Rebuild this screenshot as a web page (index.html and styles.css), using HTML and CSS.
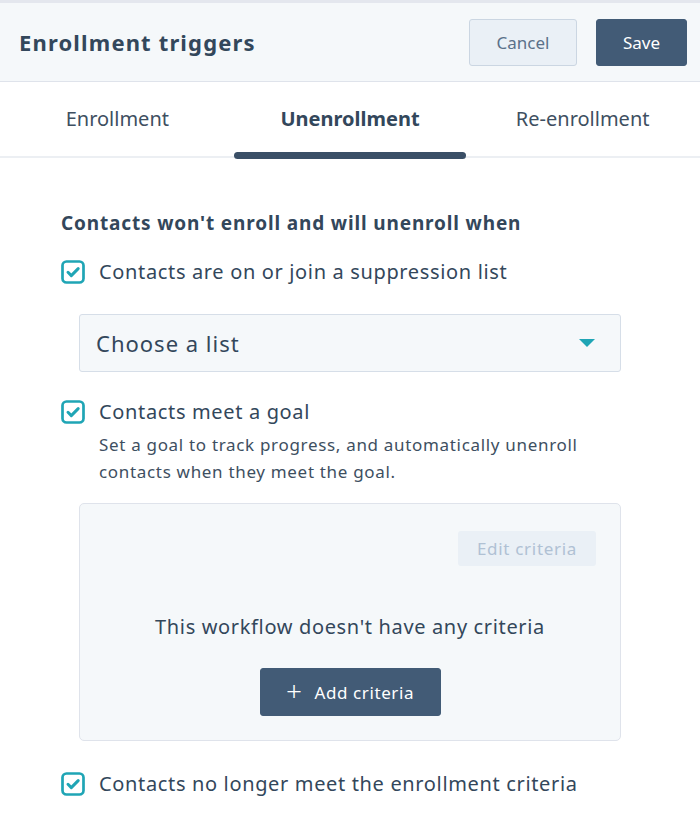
FILE: index.html
```html
<!DOCTYPE html>
<html lang="en">
<head>
  <meta charset="UTF-8" />
  <title>Enrollment triggers</title>
  <link rel="stylesheet" href="styles.css">
</head>
<body>
  <div class="panel">
    <header class="panel-header">
      <h1>Enrollment triggers</h1>
      <div class="header-actions">
        <button class="btn btn-secondary">Cancel</button>
        <button class="btn btn-primary">Save</button>
      </div>
    </header>

    <nav class="tabs">
      <div class="tab">Enrollment</div>
      <div class="tab active">Unenrollment</div>
      <div class="tab">Re-enrollment</div>
    </nav>

    <section class="content">
      <h2>Contacts won't enroll and will unenroll when</h2>

      <label class="check-row">
        <span class="checkbox">
          <svg viewBox="0 0 24 24" width="24" height="24"><rect x="1.5" y="1.5" width="21" height="21" rx="4" fill="none" stroke="#1fa5b5" stroke-width="2.7"/><path d="M7 12.3l3.3 3.3L17.2 8.6" fill="none" stroke="#1fa5b5" stroke-width="3" stroke-linecap="round" stroke-linejoin="round"/></svg>
        </span>
        <span>Contacts are on or join a suppression list</span>
      </label>

      <div class="select">
        <span>Choose a list</span>
        <span class="caret"></span>
      </div>

      <label class="check-row">
        <span class="checkbox">
          <svg viewBox="0 0 24 24" width="24" height="24"><rect x="1.5" y="1.5" width="21" height="21" rx="4" fill="none" stroke="#1fa5b5" stroke-width="2.7"/><path d="M7 12.3l3.3 3.3L17.2 8.6" fill="none" stroke="#1fa5b5" stroke-width="3" stroke-linecap="round" stroke-linejoin="round"/></svg>
        </span>
        <span>Contacts meet a goal</span>
      </label>
      <p class="help">Set a goal to track progress, and automatically unenroll<br>contacts when they meet the goal.</p>

      <div class="criteria-card">
        <div class="card-top">
          <button class="btn btn-disabled">Edit criteria</button>
        </div>
        <p class="empty">This workflow doesn't have any criteria</p>
        <button class="btn btn-primary btn-add"><span class="plus">+</span> Add criteria</button>
      </div>

      <label class="check-row last">
        <span class="checkbox">
          <svg viewBox="0 0 24 24" width="24" height="24"><rect x="1.5" y="1.5" width="21" height="21" rx="4" fill="none" stroke="#1fa5b5" stroke-width="2.7"/><path d="M7 12.3l3.3 3.3L17.2 8.6" fill="none" stroke="#1fa5b5" stroke-width="3" stroke-linecap="round" stroke-linejoin="round"/></svg>
        </span>
        <span>Contacts no longer meet the enrollment criteria</span>
      </label>
    </section>
  </div>
</body>
</html>
```

FILE: styles.css
```css
:root {
  --text: #33475b;
  --navy: #425b76;
  --line: #dfe3eb;
  --soft-bg: #f5f8fa;
  --teal: #1fa5b5;
}

body {
  margin: 0;
  background: #fff;
  color: var(--text);
  font-family: "Noto Sans", sans-serif;
}

.panel {
  width: 700px;
  height: 830px;
  overflow: hidden;
  border-top: 3px solid #e4e7ee;
  box-sizing: border-box;
}

.panel-header {
  height: 78px;
  background: var(--soft-bg);
  border-bottom: 1px solid var(--line);
  display: flex;
  align-items: center;
  justify-content: space-between;
  padding: 0 13px 0 19px;
}

.panel-header h1 {
  margin: 0;
  font-size: 22px;
  font-weight: 700;
  letter-spacing: 1.15px;
}

.header-actions {
  display: flex;
  gap: 19px;
}

.btn {
  font-family: inherit;
  border-radius: 3px;
  cursor: pointer;
}

.btn-secondary {
  width: 108px;
  height: 47px;
  background: #eaf0f6;
  border: 1px solid #cbd6e2;
  color: #5b718a;
  font-size: 17px;
}

.btn-primary {
  background: var(--navy);
  border: 1px solid var(--navy);
  color: #fff;
  font-size: 17px;
}

.header-actions .btn-primary {
  width: 91px;
  height: 47px;
}

.tabs {
  display: grid;
  grid-template-columns: repeat(3, 1fr);
  height: 74px;
  border-bottom: 2px solid #eceff3;
  padding: 0 1px;
}

.tab {
  display: flex;
  align-items: center;
  justify-content: center;
  font-size: 20px;
  color: #3e4f61;
  position: relative;
  padding-bottom: 2px;
}

.tab.active {
  font-weight: 700;
  color: var(--text);
}

.tab.active::after {
  content: '';
  position: absolute;
  left: 0;
  right: 0;
  bottom: -3px;
  height: 7px;
  border-radius: 4px;
  background: #3a4f66;
}

.content {
  padding: 51px 0 0 61px;
}

.content h2 {
  margin: 0 0 21px;
  font-size: 19px;
  font-weight: 700;
  line-height: 28px;
  letter-spacing: 0.85px;
}

.check-row {
  display: flex;
  align-items: center;
  gap: 14px;
  font-size: 20px;
  line-height: 28px;
  letter-spacing: 0.65px;
}

.checkbox {
  display: flex;
  width: 24px;
  height: 24px;
}

.select {
  margin: 28px 79px 26px 18px;
  height: 56px;
  background: var(--soft-bg);
  border: 1px solid #d6dee8;
  border-radius: 3px;
  display: flex;
  align-items: center;
  justify-content: space-between;
  padding: 0 25px 0 16px;
  font-size: 22px;
  letter-spacing: 1px;
}

.caret {
  width: 0;
  height: 0;
  border-left: 8px solid transparent;
  border-right: 8px solid transparent;
  border-top: 8px solid var(--teal);
}

.help {
  margin: 5px 0 0 38px;
  font-size: 17px;
  line-height: 27px;
  letter-spacing: 0.68px;
  color: #3e4f61;
}

.criteria-card {
  margin: 18px 79px 0 18px;
  height: 238px;
  background: var(--soft-bg);
  border: 1px solid var(--line);
  border-radius: 5px;
  box-sizing: border-box;
  display: flex;
  flex-direction: column;
  align-items: center;
  padding: 27px 24px 0;
}

.card-top {
  align-self: stretch;
  display: flex;
  justify-content: flex-end;
}

.btn-disabled {
  width: 138px;
  height: 35px;
  background: #eaf0f6;
  border: none;
  color: #b0c1d4;
  font-size: 17px;
  letter-spacing: 0.7px;
}

.empty {
  margin: 47px 0 27px;
  font-size: 20px;
  line-height: 28px;
  letter-spacing: 0.65px;
}

.btn-add {
  width: 181px;
  height: 48px;
  font-size: 17px;
  letter-spacing: 0.6px;
  display: flex;
  align-items: center;
  justify-content: center;
  gap: 12px;
}

.plus {
  font-size: 28px;
  font-weight: 300;
  line-height: 1;
  margin-top: -4px;
}

.check-row.last {
  margin-top: 29px;
}
```
